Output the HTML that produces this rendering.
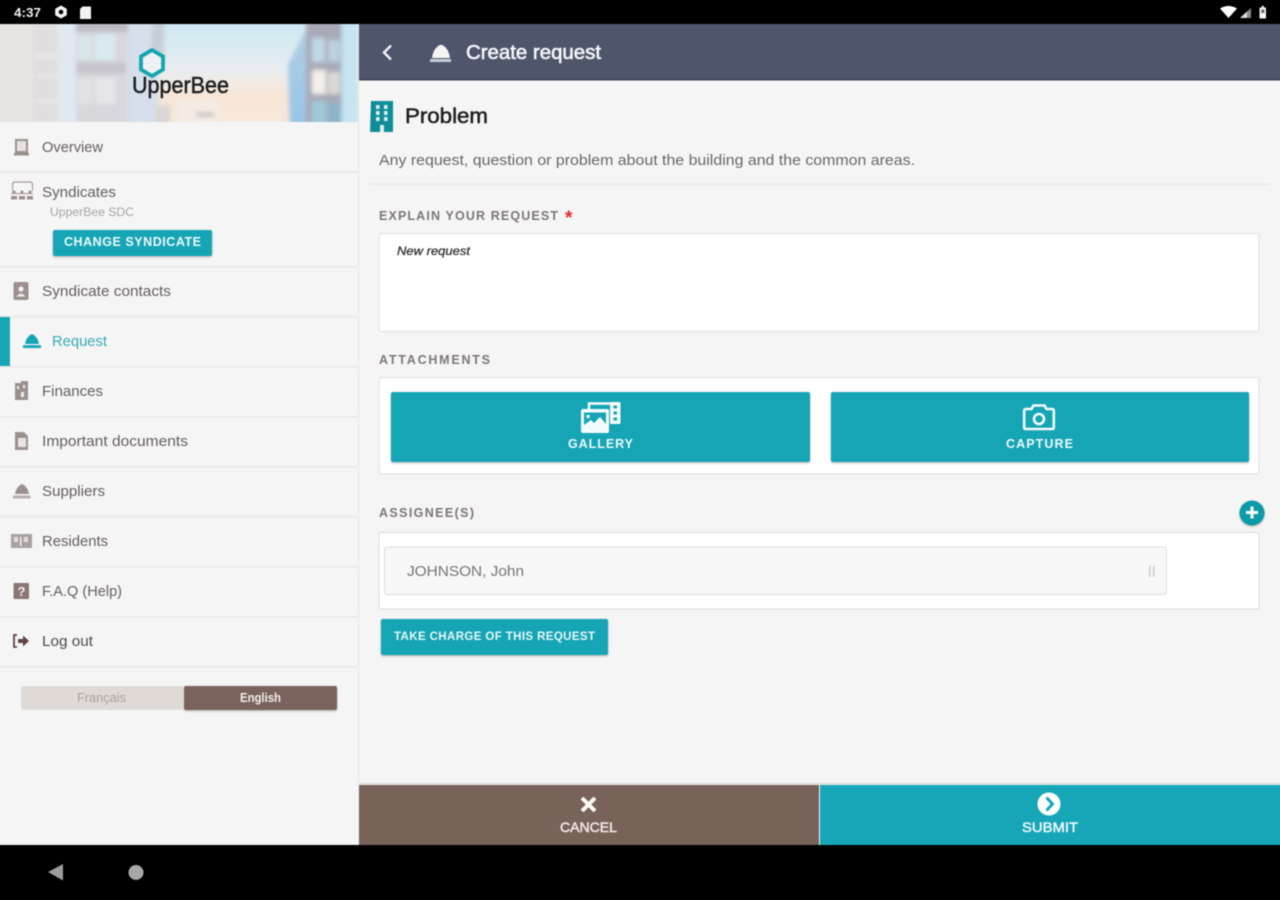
<!DOCTYPE html>
<html lang="en"><head><meta charset="utf-8"><title>UpperBee - Create request</title>
<style>
html,body{margin:0;padding:0;background:#000;width:1280px;height:900px;overflow:hidden}
#wrap{position:relative;width:1280px;height:900px;overflow:hidden}
svg{display:block;position:absolute;left:-10px;top:-10px;filter:blur(.55px)}
text{font-family:"Liberation Sans",sans-serif;white-space:pre}
.nav{font-size:14.5px;fill:#636060}
.lab{font-size:12.5px;font-weight:bold;fill:#7d7775}
.btn{font-size:12.5px;font-weight:bold;fill:#eef8fa}
.ic{fill:#9c908e}
</style></head><body><div id="wrap">
<svg width="1300" height="920" viewBox="-10 -10 1300 920" xmlns="http://www.w3.org/2000/svg">
<defs>
<linearGradient id="sky" x1="0" y1="0" x2="0" y2="1"><stop offset="0" stop-color="#cde8f2"/><stop offset=".45" stop-color="#e8edf1"/><stop offset=".75" stop-color="#f8e6d6"/><stop offset="1" stop-color="#f6e8dc"/></linearGradient>
<linearGradient id="bld" x1="0" y1="0" x2="0" y2="1"><stop offset="0" stop-color="#b4d0e0"/><stop offset="1" stop-color="#96c4e8"/></linearGradient>
<filter id="b2" x="-5%" y="-10%" width="110%" height="120%"><feGaussianBlur stdDeviation="2"/></filter>
<filter id="s" x="-5%" y="-20%" width="110%" height="150%"><feDropShadow dx="0" dy="1" stdDeviation="1" flood-color="#000" flood-opacity=".3"/></filter>
<clipPath id="hd"><rect x="-10" y="24" width="368" height="98"/></clipPath>
</defs>
<rect x="-10" y="-10" width="1300" height="920" fill="#f5f5f5"/>

<!-- header art -->
<g clip-path="url(#hd)">
<rect x="-10" y="24" width="368" height="98" fill="url(#sky)"/>
<g filter="url(#b2)">
<rect x="-20" y="14" width="80" height="118" fill="#e6e3e3"/>
<rect x="33" y="24" width="24" height="98" fill="#e0dedf"/>
<rect x="36" y="55" width="20" height="2" fill="#f0f0f0"/><rect x="36" y="75" width="20" height="2" fill="#f0f0f0"/><rect x="36" y="100" width="20" height="2" fill="#f0f0f0"/>
<rect x="58" y="14" width="18" height="118" fill="#e2e8f0"/>
<rect x="76" y="14" width="52" height="118" fill="#d8d8dc"/>
<rect x="76" y="14" width="52" height="18" fill="#bcbcc2"/>
<rect x="78" y="36" width="14" height="24" fill="#d8e6e8"/><rect x="95" y="34" width="20" height="26" fill="#d8eaee"/>
<rect x="76" y="62" width="50" height="12" fill="#c8c6cc"/>
<rect x="78" y="78" width="15" height="26" fill="#e2e2e4"/><rect x="96" y="78" width="20" height="26" fill="#e6e6e8"/>
<rect x="128" y="14" width="30" height="118" fill="#d6dfec"/>
<rect x="152" y="14" width="12" height="50" fill="#c8ced8"/>
<rect x="155" y="105" width="15" height="27" fill="#d8d6d6"/><rect x="178" y="100" width="40" height="32" fill="#f4ece4"/><rect x="196" y="112" width="18" height="5" fill="#ccc8c4"/>
<path d="M288 64 L305 32 L358 14 V132 H290Z" fill="url(#bld)"/>
<rect x="306" y="14" width="35" height="118" fill="#a8aab8"/>
<rect x="312" y="38" width="13" height="24" fill="#c0d8e4"/><rect x="328" y="40" width="12" height="22" fill="#bcd0dc"/>
<rect x="312" y="70" width="14" height="24" fill="#f4eee8"/><rect x="328" y="72" width="12" height="22" fill="#dcd8d6"/>
<rect x="312" y="101" width="14" height="31" fill="#9ccad6"/><rect x="328" y="103" width="12" height="29" fill="#8cb4cc"/>
<rect x="342" y="14" width="16" height="118" fill="#c8e4f0"/>
</g>
</g>
<path d="M152 50 L163 56.500 V69.500 L152 76 L141 69.500 V56.500Z" fill="#eef2f4" stroke="#14a5b0" stroke-width="3.800"/>
<text x="132" y="93" font-size="23" fill="#1c1e20" textLength="97" lengthAdjust="spacingAndGlyphs" style="stroke:#1c1e20;stroke-width:.5">UpperBee</text>
<rect x="358" y="24" width="1" height="760" fill="#e6e6e6"/>

<!-- status bar -->
<rect x="-10" y="-10" width="1300" height="34" fill="#000"/>
<text x="14" y="17" font-size="12.500" font-weight="bold" fill="#eee" textLength="27" lengthAdjust="spacingAndGlyphs">4:37</text>
<path d="M61 5.500 L66.800 8.800 V15.200 L61 18.500 L55.200 15.200 V8.800Z" fill="#f4f4f4"/><circle cx="61" cy="12" r="2.300" fill="#000"/>
<path d="M82.500 6.500 H91 V19 H80 V9Z" fill="#f2f2f2"/>
<path d="M1220 8.500 Q1228.500 3.500 1237 8.500 L1228.500 18Z" fill="#fff"/>
<path d="M1240 18 L1251 8 V18Z" fill="#8a8a8a"/><path d="M1240 18 L1247 11.500 V18Z" fill="#ddd"/>
<rect x="1259.500" y="7.500" width="6.500" height="11" rx=".8" fill="#f4f4f4"/><rect x="1261.800" y="5.800" width="2" height="2" fill="#f4f4f4"/><rect x="1261.300" y="9.500" width="3" height="3.500" fill="#666"/>

<!-- sidebar separators -->
<g fill="#e8e8e8">
<rect x="-10" y="171" width="368" height="1.500"/><rect x="-10" y="266" width="368" height="1.500"/><rect x="-10" y="316" width="368" height="1.500"/><rect x="-10" y="366" width="368" height="1.500"/><rect x="-10" y="416" width="368" height="1.500"/><rect x="-10" y="466" width="368" height="1.500"/><rect x="-10" y="516" width="368" height="1.500"/><rect x="-10" y="566" width="368" height="1.500"/><rect x="-10" y="616" width="368" height="1.500"/><rect x="-10" y="666" width="368" height="1.500"/>
</g>

<!-- sidebar items -->
<path class="ic" d="M15 139 H28 V153 H15Z M17 141 V151 H26 V141Z" fill-rule="evenodd"/><rect x="17" y="141" width="9" height="10" fill="#e6e2e1"/><rect class="ic" x="14" y="153" width="15" height="2.500"/>
<text class="nav" x="42" y="152" textLength="61" lengthAdjust="spacingAndGlyphs">Overview</text>

<path d="M12.500 191 V185 Q12.500 182 15 182 H30 Q32.500 182 32.500 185 V191" fill="none" stroke="#a89e9b" stroke-width="1.200"/>
<g class="ic"><rect x="11" y="193" width="22" height="1"/><circle cx="14" cy="192" r="1.500"/><circle cx="22" cy="192" r="1.500"/><circle cx="30" cy="192" r="1.500"/><rect x="11" y="196" width="6" height="3.500"/><rect x="19" y="196" width="6" height="3.500"/><rect x="27" y="196" width="6" height="3.500"/></g>
<text class="nav" x="42" y="197" textLength="74" lengthAdjust="spacingAndGlyphs">Syndicates</text>
<text x="50" y="216" font-size="11.500" fill="#a4a4a4" textLength="84" lengthAdjust="spacingAndGlyphs">UpperBee SDC</text>
<rect x="53" y="230" width="159" height="26" rx="2" fill="#17a5b5" filter="url(#s)"/>
<text class="btn" x="64" y="246" textLength="137">CHANGE SYNDICATE</text>

<rect class="ic" x="13.500" y="282" width="15" height="18" rx="2"/><circle cx="21" cy="289" r="2.600" fill="#f2f0ef"/><path d="M16.500 296.500 Q21 291 25.500 296.500Z" fill="#f2f0ef"/>
<text class="nav" x="42" y="296" textLength="129" lengthAdjust="spacingAndGlyphs">Syndicate contacts</text>

<rect x="-10" y="317" width="20" height="49" fill="#17a5b5"/>
<path d="M25 344 Q26 338 30 335 Q32 333.500 34 335 Q38 338 39 344Z" fill="#17a5b5"/><rect x="23" y="345.200" width="18" height="2.800" fill="#17a5b5"/>
<text class="nav" x="52" y="346" textLength="55" lengthAdjust="spacingAndGlyphs" style="fill:#37a9b8">Request</text>

<path class="ic" d="M15 383 H21 L21 381 H28 V400 H15Z"/><rect x="17" y="386" width="2" height="3" fill="#f2f0ef"/><rect x="23" y="385" width="2" height="3" fill="#f2f0ef"/><rect x="21" y="392" width="3" height="5" fill="#f2f0ef"/>
<text class="nav" x="42" y="396" textLength="61" lengthAdjust="spacingAndGlyphs">Finances</text>

<path class="ic" d="M15 432 H24 L28 436 V450 H15Z"/><rect x="18" y="438" width="8" height="9" fill="#e8e4e3"/>
<text class="nav" x="42" y="446" textLength="146" lengthAdjust="spacingAndGlyphs">Important documents</text>

<path class="ic" d="M15 494 Q16 488 20 485 Q22 483.500 24 485 Q28 488 29 494Z"/><rect x="13" y="495.500" width="17.500" height="3" fill="#b8b0ae"/>
<text class="nav" x="42" y="496" textLength="63" lengthAdjust="spacingAndGlyphs">Suppliers</text>

<path d="M11 534 H32 V548 H11Z" fill="#a8a2a0"/><rect x="20" y="537" width="1.500" height="9" fill="#eee"/><rect x="14" y="537" width="4" height="5" fill="#e2dedd"/><rect x="24" y="537" width="4" height="5" fill="#e2dedd"/>
<text class="nav" x="42" y="546" textLength="66" lengthAdjust="spacingAndGlyphs">Residents</text>

<rect x="13.500" y="583" width="15.500" height="16" rx="1" fill="#8a7673"/>
<text x="17.500" y="596" font-size="13" font-weight="bold" fill="#f2f0ef">?</text>
<text class="nav" x="42" y="596" textLength="80" lengthAdjust="spacingAndGlyphs">F.A.Q (Help)</text>

<path d="M17 635 H14 V647 H17" fill="none" stroke="#5d4644" stroke-width="1.800"/><path d="M18 639 H23 V635.500 L29 641 L23 646.500 V643 H18Z" fill="#5d4644"/>
<text class="nav" x="42" y="646" textLength="51" lengthAdjust="spacingAndGlyphs" style="fill:#4e4c4c">Log out</text>

<rect x="21" y="686" width="162" height="24" rx="2" fill="#e0dad7"/>
<rect x="184" y="686" width="153" height="24" rx="2" fill="#7a645c" filter="url(#s)"/>
<text x="77" y="702" font-size="12.500" fill="#a8a09d" textLength="49" lengthAdjust="spacingAndGlyphs">Français</text>
<text x="240" y="702" font-size="12.500" font-weight="bold" fill="#f2eeec" textLength="41" lengthAdjust="spacingAndGlyphs">English</text>

<!-- top bar -->
<rect x="359" y="24" width="931" height="56" fill="#4f566b"/>
<rect x="359" y="79" width="931" height="1.500" fill="#3a4258"/>
<path d="M391 45.500 L384 52.500 L391 59.500" fill="none" stroke="#f4f4f4" stroke-width="2.400"/>
<path d="M432 58 Q433 50 438 46 Q441 43.500 444 46 Q449 50 450 58Z" fill="#f5f5f5"/><rect x="430" y="59" width="21" height="3" fill="#c8cbd6"/>
<text x="466" y="59" font-size="20.500" fill="#f5f6f8" textLength="135" lengthAdjust="spacingAndGlyphs" style="stroke:#f5f6f8;stroke-width:.6">Create request</text>

<!-- problem -->
<path d="M371 101 H393 V132 H370Z" fill="#108e98"/>
<g fill="#d8eeef"><rect x="376" y="105" width="3.500" height="4"/><rect x="384" y="105" width="3.500" height="4"/><rect x="376" y="111" width="3.500" height="4"/><rect x="384" y="111" width="3.500" height="4"/><rect x="376" y="117" width="3.500" height="4"/><rect x="384" y="117" width="3.500" height="4"/><rect x="380" y="125" width="4" height="7"/></g>
<text x="405" y="123" font-size="21" fill="#1e1e1e" textLength="83" lengthAdjust="spacingAndGlyphs" style="stroke:#1e1e1e;stroke-width:.5">Problem</text>
<text x="379" y="165" font-size="15" fill="#686868" textLength="536" lengthAdjust="spacingAndGlyphs">Any request, question or problem about the building and the common areas.</text>
<rect x="368" y="183.500" width="902" height="1.200" fill="#e6e6e6"/>

<!-- explain -->
<text class="lab" x="379" y="220" textLength="179">EXPLAIN YOUR REQUEST</text>
<text x="565" y="224" font-size="19" font-weight="bold" fill="#e8262c">*</text>
<rect x="379" y="233.500" width="880" height="98" rx="2" fill="#fff" stroke="#dedede"/>
<text x="397" y="255" font-size="12" font-style="italic" fill="#333" textLength="73" lengthAdjust="spacingAndGlyphs" style="stroke:#333;stroke-width:.3">New request</text>

<!-- attachments -->
<text class="lab" x="379" y="364" textLength="111">ATTACHMENTS</text>
<rect x="379" y="377.500" width="880" height="96.500" rx="2" fill="#fff" stroke="#dedede"/>
<rect x="391" y="392" width="419" height="70" rx="2" fill="#17a5b5" filter="url(#s)"/>
<rect x="831" y="392" width="418" height="70" rx="2" fill="#17a5b5" filter="url(#s)"/>
<!-- gallery icon -->
<path d="M589 409 V403.500 H611" fill="none" stroke="#f4fbfc" stroke-width="2.400"/>
<rect x="610" y="402" width="10.500" height="22" rx="1" fill="#f4fbfc"/>
<rect x="613.500" y="405.500" width="3.500" height="3" fill="#17a5b5"/><rect x="613.500" y="411.500" width="3.500" height="3" fill="#17a5b5"/><rect x="613.500" y="417.500" width="3.500" height="3" fill="#17a5b5"/>
<rect x="581" y="409" width="28" height="24" rx="2" fill="#f4fbfc"/>
<path d="M584 412.500 H606 V424 L600 417 L594 423 L591 420 L584 425Z" fill="#17a5b5"/><rect x="586.500" y="415" width="3" height="3" fill="#f4fbfc"/>
<text class="btn" x="568" y="448" textLength="65">GALLERY</text>
<!-- camera icon -->
<path d="M1026 409 H1031.500 L1033.500 405.500 H1044.500 L1046.500 409 H1052 Q1053.800 409 1053.800 411 V427.500 Q1053.800 429 1052 429 H1026 Q1024.200 429 1024.200 427.500 V411 Q1024.200 409 1026 409Z" fill="none" stroke="#f4fbfc" stroke-width="2.600"/>
<circle cx="1039" cy="419" r="5" fill="none" stroke="#f4fbfc" stroke-width="2.600"/>
<text class="btn" x="1006" y="448" textLength="67">CAPTURE</text>

<!-- assignee -->
<text class="lab" x="379" y="517" textLength="95">ASSIGNEE(S)</text>
<circle cx="1252" cy="513" r="12.500" fill="#109aa8" filter="url(#s)"/>
<path d="M1252 506.500 V518.500 M1246 512.500 H1258" stroke="#fff" stroke-width="3"/>
<rect x="379" y="532.500" width="880" height="76.500" rx="2" fill="#fff" stroke="#dcdcdc"/>
<rect x="384.500" y="547" width="782" height="47.500" rx="3" fill="#f7f7f7" stroke="#dcdcdc"/>
<text x="407" y="576" font-size="15" fill="#757575" textLength="117" lengthAdjust="spacingAndGlyphs">JOHNSON, John</text>
<rect x="1149" y="566" width="1.500" height="11" fill="#c8c8c8"/><rect x="1153" y="566" width="1.500" height="11" fill="#c8c8c8"/>
<rect x="381" y="619" width="227" height="36" rx="2" fill="#17a5b5" filter="url(#s)"/>
<text x="394" y="640" font-size="11.500" font-weight="bold" fill="#e8f6f8" textLength="201">TAKE CHARGE OF THIS REQUEST</text>

<!-- bottom actions -->
<rect x="359" y="783" width="931" height="1.500" fill="#dcdad8"/>
<rect x="359" y="785" width="460" height="60" fill="#78635b"/>
<rect x="820" y="785" width="470" height="60" fill="#17a6b8"/>
<path d="M582 798 L595 811 M595 798 L582 811" stroke="#fbf8f6" stroke-width="4"/>
<text x="560" y="832" font-size="14" fill="#f0e8e4" textLength="57" lengthAdjust="spacingAndGlyphs" style="stroke:#f0e8e4;stroke-width:.5">CANCEL</text>
<circle cx="1049" cy="804" r="11.500" fill="#fff"/>
<path d="M1046.500 797.500 L1052.500 804 L1046.500 810.500" fill="none" stroke="#17a6b8" stroke-width="3"/>
<text x="1022" y="832" font-size="14" fill="#e8f6f8" textLength="56" lengthAdjust="spacingAndGlyphs" style="stroke:#e8f6f8;stroke-width:.5">SUBMIT</text>

<!-- android nav -->
<rect x="-10" y="845" width="1300" height="65" fill="#000"/>
<path d="M63 864 V880.500 L48 872Z" fill="#9c9c9c"/>
<circle cx="136" cy="872.500" r="7.500" fill="#a8a8a8"/>
</svg>
</div></body></html>
